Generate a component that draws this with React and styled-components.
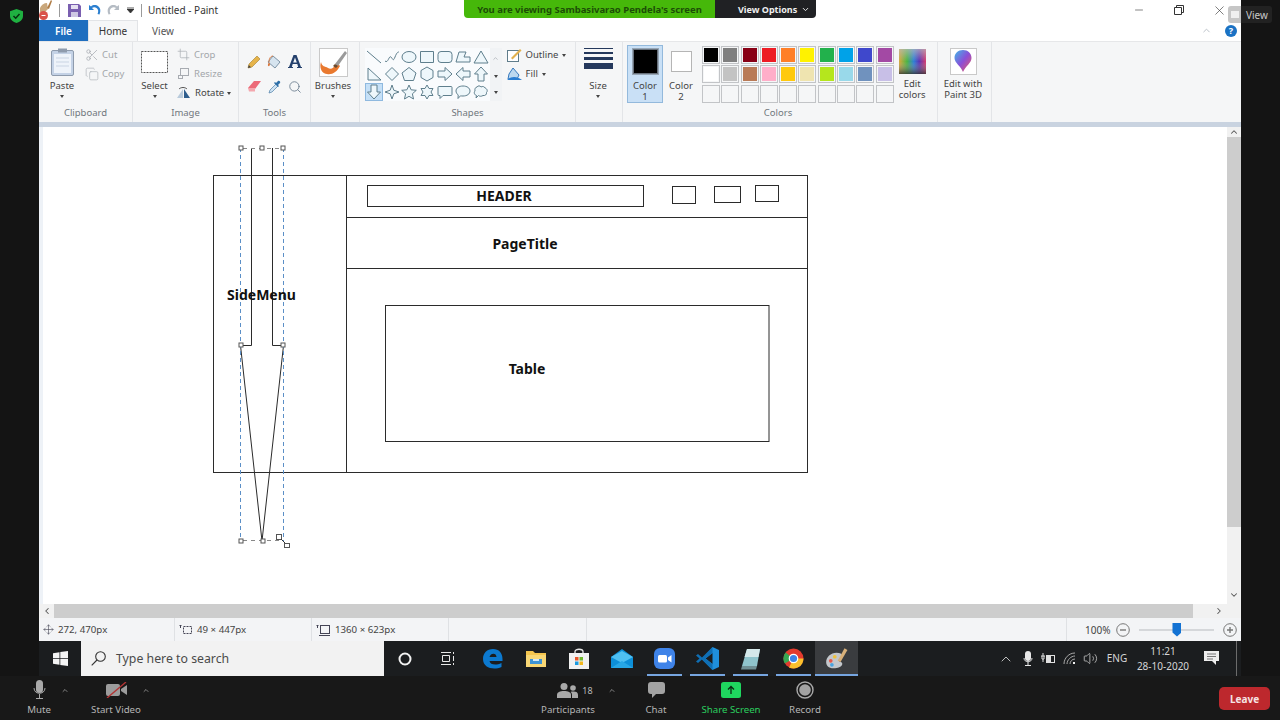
import styled, { createGlobalStyle } from 'styled-components';
import { ChevronDown, ChevronUp, ChevronLeft, ChevronRight, Scissors, Copy, Crop, Search, Move, Minus, Volume2, X } from 'lucide-react';

const GlobalStyle = createGlobalStyle`
  html, body { margin: 0; padding: 0; background: #141414; }
  * { box-sizing: border-box; }
  body { font-family: "Noto Sans", "Open Sans", sans-serif; }
`;

const Screen = styled.div`
  position: relative;
  width: 1280px;
  height: 720px;
  overflow: hidden;
  background: #141414;
`;
const Upper = styled.div`
  display: flex;
  height: 676px;
`;
const Side = styled.div`
  width: 39px;
  flex: none;
  padding: 9px 0 0 10px;
  line-height: 0;
`;
const Middle = styled.div`
  width: 1202px;
  display: flex;
  flex-direction: column;
`;
const PaintWindow = styled.div`
  height: 641px;
  display: flex;
  flex-direction: column;
  background: #fff;
  color: #3c3c3c;
  font-size: 10px;
`;

/* title bar */
const TitleBar = styled.div`
  height: 20px;
  display: flex;
  align-items: center;
  background: #fff;
`;
const QuickIcon = styled.span`
  width: ${p => p.$w}px;
  height: 20px;
  flex: none;
  display: flex;
  align-items: center;
  justify-content: center;
`;
const QuickSep = styled.span`
  width: 1px;
  height: 13px;
  flex: none;
  background: #9a9a9a;
`;
const TitleText = styled.span`
  margin-left: 6px;
  font-size: 10px;
  color: #333;
`;
const WinButtons = styled.div`
  margin-left: auto;
  padding-right: 2px;
  display: flex;
`;
const WinButton = styled.span`
  width: 40px;
  height: 20px;
  display: flex;
  align-items: center;
  justify-content: center;
`;

/* tabs */
const TabRow = styled.div`
  height: 21px;
  display: flex;
  align-items: stretch;
`;
const FileTab = styled.div`
  width: 49px;
  background: #1f6ebf;
  color: #fff;
  font-size: 10px;
  font-weight: 600;
  display: flex;
  align-items: center;
  justify-content: center;
`;
const Tab = styled.div`
  width: 50px;
  font-size: 10px;
  display: flex;
  align-items: center;
  justify-content: center;
  color: ${p => (p.$active ? '#333' : '#555')};
  background: ${p => (p.$active ? '#f6f7f8' : 'transparent')};
  border: 1px solid ${p => (p.$active ? '#e2e4e7' : 'transparent')};
  border-bottom: 0;
`;
const TabTools = styled.div`
  margin-left: auto;
  width: 40px;
  padding-right: 4px;
  display: flex;
  align-items: center;
  justify-content: space-between;
`;
const Help = styled.span`
  width: 12px;
  height: 12px;
  border-radius: 50%;
  background: #1a72c4;
  color: #fff;
  font-size: 9px;
  font-weight: 700;
  display: flex;
  align-items: center;
  justify-content: center;
`;

/* ribbon */
const Ribbon = styled.div`
  height: 81px;
  display: flex;
  background: #f5f6f7;
  border-top: 1px solid #e6e7e9;
`;
const Group = styled.div`
  width: ${p => p.$w}px;
  flex: none;
  display: flex;
  flex-direction: column;
  border-right: 1px solid #e3e5e8;
`;
const GroupBody = styled.div`
  height: 62px;
  display: flex;
  padding-left: ${p => p.$pl || 0}px;
  gap: ${p => p.$gap || 0}px;
`;
const GroupLabel = styled.div`
  height: 18px;
  padding-right: ${p => p.$pr || 0}px;
  font-size: 9.5px;
  color: #70767d;
  text-align: center;
  line-height: 18px;
`;
const LargeButton = styled.div`
  width: ${p => p.$w}px;
  flex: none;
  height: 58px;
  padding-top: 2px;
  display: flex;
  flex-direction: column;
  align-items: center;
`;
const LargeIcon = styled.div`
  height: 36px;
  display: flex;
  align-items: center;
  justify-content: center;
`;
const LargeText = styled.div`
  height: 11px;
  line-height: 11px;
  font-size: 9.5px;
  color: #444;
  white-space: nowrap;
`;
const Caret = styled.span`
  display: inline-block;
  width: 0;
  height: 0;
  margin: ${p => p.$m || '4px 0 0'};
  border-left: 2.5px solid transparent;
  border-right: 2.5px solid transparent;
  border-top: 3px solid #444;
`;
const SmallColumn = styled.div`
  display: flex;
  flex-direction: column;
  padding-top: 3px;
`;
const SmallRow = styled.div`
  height: 19px;
  display: flex;
  align-items: center;
  gap: ${p => p.$gap || 4}px;
  font-size: 9.5px;
  color: ${p => (p.$dim ? '#a3a6aa' : '#444')};
  white-space: nowrap;
`;
const ToolGrid = styled.div`
  display: grid;
  grid-template-columns: repeat(3, 20.5px);
  grid-auto-rows: 25px;
  padding: 7px 0 0 5px;
  place-items: center;
`;
const Gallery = styled.div`
  display: flex;
  margin-top: 6px;
  height: 53px;
  background: #f9fbfd;
`;
const ShapeGrid = styled.div`
  display: grid;
  grid-template-columns: repeat(7, 17.8px);
  grid-auto-rows: 17.6px;
`;
const ShapeCell = styled.div`
  display: flex;
  align-items: center;
  justify-content: center;
  background: ${p => (p.$on ? '#c5e0f7' : 'transparent')};
  outline: ${p => (p.$on ? '1px solid #8fb9df' : 'none')};
  outline-offset: -1px;
`;
const GalleryScroll = styled.div`
  width: 12px;
  display: flex;
  flex-direction: column;
  align-items: center;
  justify-content: space-around;
  background: #f1f3f5;
`;
const SizeLines = styled.div`
  width: 29px;
  height: 34px;
  display: flex;
  flex-direction: column;
  gap: 3px;
  padding-top: 3px;
`;
const SizeLine = styled.div`
  height: ${p => p.$h}px;
  background: #24385c;
`;
const ColorButton = styled.div`
  width: 36px;
  height: 58px;
  margin-top: 3px;
  flex: none;
  display: flex;
  flex-direction: column;
  align-items: center;
  padding-top: ${p => (p.$on ? 2 : 0)}px;
  background: ${p => (p.$on ? '#c9e0f6' : 'transparent')};
  border: 1px solid ${p => (p.$on ? '#93b9dc' : 'transparent')};
`;
const ColorSwatch = styled.div`
  width: ${p => p.$s}px;
  height: ${p => p.$s}px;
  margin: ${p => p.$m};
  flex: none;
  background: ${p => p.$c};
  border: 2px solid ${p => (p.$on ? '#68717c' : '#fff')};
  outline: 1px solid ${p => (p.$on ? '#97a6b5' : '#b5b5b5')};
  outline-offset: -1px;
`;
const Palette = styled.div`
  display: grid;
  grid-template-columns: repeat(10, 18px);
  grid-auto-rows: 18px;
  gap: 1.3px;
  margin: 4px 0 0 3px;
`;
const PaletteCell = styled.div`
  background: ${p => p.$c || '#f5f6f7'};
  border: 2px solid #f5f6f7;
  outline: 1px solid #c2c4c7;
  outline-offset: -1px;
`;
const IconFrame = styled.div`
  width: ${p => p.$s || 27}px;
  height: ${p => p.$s || 27}px;
  background: #fff;
  border: 1px solid #c9c9c9;
  display: flex;
  align-items: center;
  justify-content: center;
  overflow: hidden;
`;
const BlueBand = styled.div`
  height: 5px;
  flex: none;
  background: #c9d3e0;
`;

/* canvas */
const CanvasRow = styled.div`
  height: 477px;
  display: flex;
`;
const CanvasPane = styled.div`
  flex: 1;
  padding-left: 4px;
  background: #eef2f7;
`;
const CanvasSheet = styled.svg`
  display: block;
  width: 1184px;
  height: 477px;
  background: #fff;
`;
const VScroll = styled.div`
  width: 14px;
  display: flex;
  flex-direction: column;
  background: #f1f1f1;
`;
const ScrollEnd = styled.div`
  height: ${p => p.$h || 10}px;
  width: ${p => p.$w || 14}px;
  flex: none;
  display: flex;
  align-items: center;
  justify-content: center;
  margin-top: ${p => p.$mt || 0}px;
  margin-left: ${p => p.$ml || 0}px;
`;
const VThumb = styled.div`
  height: 390px;
  background: #cdcdcd;
`;
const HScroll = styled.div`
  height: 14px;
  flex: none;
  display: flex;
  background: #f1f1f1;
`;
const HThumb = styled.div`
  width: 1139px;
  background: #cdcdcd;
`;

/* status bar */
const StatusBar = styled.div`
  height: 23px;
  display: flex;
  background: #f3f4f6;
  font-size: 9.7px;
  color: #444;
`;
const StatusCell = styled.div`
  width: ${p => p.$w}px;
  flex: none;
  display: flex;
  align-items: center;
  gap: ${p => p.$gap || 4}px;
  padding-left: 4px;
  border-right: 1px solid #dfe1e4;
`;
const ZoomCell = styled.div`
  flex: 1;
  display: flex;
  align-items: center;
  padding-left: 18px;
  font-size: 10px;
`;
const ZoomTrack = styled.div`
  position: relative;
  width: 75px;
  height: 2px;
  margin: 0 9px 0 9px;
  background: #d5d7da;
`;
const ZoomThumb = styled.div`
  position: absolute;
  left: 33px;
  top: -6px;
  width: 9px;
  height: 14px;
  background: #1372d3;
  clip-path: polygon(0 0, 100% 0, 100% 72%, 50% 100%, 0 72%);
`;

/* windows taskbar */
const Taskbar = styled.div`
  height: 35px;
  display: flex;
  background: #1b1d1f;
`;
const StartButton = styled.div`
  width: 42px;
  display: flex;
  align-items: center;
  justify-content: center;
`;
const SearchBox = styled.div`
  width: 303px;
  display: flex;
  align-items: center;
  gap: 10px;
  padding-left: 10px;
  background: #f2f2f2;
  color: #4a4a4a;
  font-size: 12.3px;
`;
const TaskIcon = styled.div`
  position: relative;
  width: ${p => p.$w || 43}px;
  flex: none;
  display: flex;
  align-items: center;
  justify-content: center;
  background: ${p => (p.$active ? '#3a3c3f' : 'transparent')};
  &::after {
    content: ${p => (p.$open ? "''" : 'none')};
    position: absolute;
    bottom: 0;
    left: ${p => (p.$active ? 0 : 4)}px;
    right: ${p => (p.$active ? 0 : 4)}px;
    height: 2px;
    background: #76a5e0;
  }
`;
const Tray = styled.div`
  margin-left: auto;
  display: flex;
  color: #d6d6d6;
  font-size: 10px;
`;
const TrayItem = styled.div`
  width: ${p => p.$w}px;
  display: flex;
  flex-direction: column;
  align-items: center;
  justify-content: center;
  line-height: 15px;
  white-space: nowrap;
`;
const TrayEdge = styled.div`
  width: 1px;
  margin: 0 4px 0 6px;
  background: #6c6c6c;
`;

/* meeting toolbar */
const MeetingBar = styled.div`
  height: 44px;
  display: flex;
  padding-left: 17px;
  background: #181818;
`;
const MeetGroup = styled.div`
  display: flex;
  margin-left: ${p => p.$ml || 0}px;
`;
const MeetItem = styled.div`
  width: ${p => p.$w}px;
  margin-left: ${p => p.$ml || 0}px;
  flex: none;
  padding-top: 4px;
  display: flex;
  flex-direction: column;
  align-items: center;
`;
const MeetIcon = styled.div`
  height: 20px;
  display: flex;
  align-items: center;
  gap: 4px;
  padding-left: ${p => p.$pl || 0}px;
  color: #b8b8b8;
  font-size: 9px;
`;
const MeetLabel = styled.div`
  margin-top: 4px;
  line-height: 12px;
  font-size: 9.7px;
  white-space: nowrap;
  color: ${p => p.$c || '#b5b5b5'};
`;
const MeetCaret = styled.div`
  width: 8px;
  margin-left: ${p => p.$ml || 0}px;
  height: 28px;
  flex: none;
  display: flex;
  align-items: center;
  justify-content: center;
`;
const LeaveButton = styled.div`
  width: 51px;
  height: 23px;
  margin: 11px 10px 0 auto;
  border-radius: 5px;
  background: #bd282d;
  color: #f5e3e3;
  font-size: 10px;
  font-weight: 700;
  display: flex;
  align-items: center;
  justify-content: center;
`;

/* things lying over the window */
const ShareBanner = styled.div`
  position: absolute;
  left: 464px;
  top: 0;
  height: 18px;
  display: flex;
  font-size: 9.5px;
  font-weight: 700;
  border-radius: 0 0 4px 4px;
  overflow: hidden;
  white-space: nowrap;
`;
const BannerText = styled.div`
  width: 251px;
  display: flex;
  align-items: center;
  justify-content: center;
  background: #46b80a;
  color: #1c4d07;
`;
const BannerOptions = styled.div`
  width: 101px;
  padding-left: 23px;
  display: flex;
  align-items: center;
  gap: 4px;
  font-size: 9px;
  background: #202124;
  color: #f0f0f0;
`;
const ViewPill = styled.div`
  position: absolute;
  left: 1228px;
  top: 6px;
  width: 44px;
  height: 17px;
  padding-left: 3px;
  border-radius: 3px;
  display: flex;
  align-items: center;
  gap: 7px;
  background: linear-gradient(90deg, #c6c6c6 13px, #222 13px);
  color: #c9c9c9;
  font-size: 10px;
`;
const ViewSquare = styled.span`
  width: 8px;
  height: 7px;
  background: #efefef;
`;

const palette = [
  ['#000000', '#7f7f7f', '#880015', '#ed1c24', '#ff7f27', '#fff200', '#22b14c', '#00a2e8', '#3f48cc', '#a349a4'],
  ['#ffffff', '#c3c3c3', '#b97a57', '#ffaec9', '#ffc90e', '#efe4b0', '#b5e61d', '#99d9ea', '#7092be', '#c8bfe7'],
  Array(10).fill(''),
];

const shapes = [
  'M1 2L15 14',
  'M1 12C4 15 5 6 7 8S9 13 11 8S14 3 15 3',
  'M1 8a7 5.5 0 1 0 14 0a7 5.5 0 1 0 -14 0z',
  'M1.5 2.5h13v11h-13z',
  'M4 2.5h8a3 3 0 0 1 3 3v5a3 3 0 0 1-3 3H4a3 3 0 0 1-3-3v-5a3 3 0 0 1 3-3z',
  'M1 13L4 3h7l-2 5h6v5z',
  'M8 2L15 14H1z',
  'M2 2L15 14H2z',
  'M8 1.500L14.500 8L8 14.500L1.500 8z',
  'M8 1.500L15 7L12.500 14.500h-9L1 7z',
  'M8 1l6 3.500v7L8 15l-6-3.500v-7z',
  'M1 5h7V1.500L15 8l-7 6.500V11H1z',
  'M15 5H8V1.500L1 8l7 6.500V11h7z',
  'M5 15V8H1.500L8 1l6.500 7H11v7z',
  'M5 1v7H1.500L8 15l6.500-7H11V1z',
  'M8 1l1.800 5.200L15 8l-5.200 1.800L8 15l-1.800-5.200L1 8l5.200-1.800z',
  'M8 1l2.100 4.800 5.200.5-3.900 3.500 1.100 5.200L8 12.300 3.500 15l1.100-5.200L.7 6.300l5.200-.5z',
  'M8 1l2 3.500h4L12 8l2 3.500h-4L8 15l-2-3.500H2L4 8 2 4.500h4z',
  'M2 2.500h12a1 1 0 0 1 1 1v7a1 1 0 0 1-1 1H6l-3 3v-3H2a1 1 0 0 1-1-1v-7a1 1 0 0 1 1-1z',
  'M8 2c4 0 7 2 7 5s-3 5-7 5c-1 0-2 0-2.500-.2L3 14.500l.2-3.500C2 10 1 8.500 1 7c0-3 3-5 7-5z',
  'M4 3c1-1.500 3-1.500 4 0c1.500-1 3.500-.5 4 1c2 .5 3 3 1.500 4.500c.5 2-1.500 3.500-3.500 3c-1.500 1-3.500 1-4.500 0L3 14l.5-2.500c-2-.5-3-3-1.500-4.500C1.500 5 2.500 3 4 3z',
];

const PaintLogo = ({ size = 20 }) => (
  <svg width={size} height={size} viewBox="0 0 20 20">
    <path d="M1 13c0-4 4-8 9-8 3 0 5 1 5 3s-3 1.500-3 3.500 3.500 1 3 3.500-4 3.500-7.500 3.500C3 18.500 1 16 1 13z" fill="#c3c7cc" />
    <circle cx="5" cy="12" r="1.600" fill="#e8574a" />
    <circle cx="8.500" cy="8.500" r="1.600" fill="#f0c23c" />
    <circle cx="6" cy="15.500" r="1.600" fill="#4aa3df" />
    <path d="M11 12L17 1l2.500 1.500-6 10.500z" fill="#d8b07a" />
  </svg>
);

const Handle = ({ x, y }) => <rect x={x - 2} y={y - 2} width="4" height="4" fill="#fff" stroke="#555" strokeWidth="1" />;

const Wireframe = () => (
  <CanvasSheet viewBox="43 127 1184 477">
    <g fill="none" stroke="#2b2b2b" strokeWidth="1">
      <rect x="213.500" y="175.500" width="594" height="297" />
      <path d="M346.500 175v297M347 217.500h460M347 268.500h460" />
      <rect x="367.500" y="185.500" width="276" height="21" />
      <rect x="672.500" y="186.500" width="23" height="17" />
      <rect x="714.500" y="186.500" width="26" height="16" />
      <rect x="755.500" y="185.500" width="23" height="16" />
      <rect x="385.500" y="305.500" width="383.500" height="136" />
      <path d="M251.500 148v197.500H240.500L262 541L283.500 345.500H272.500V148" />
    </g>
    <g fill="none" stroke="#5b8fc7" strokeWidth="1" strokeDasharray="4 3">
      <path d="M240.500 148v393M283.500 148v393" />
    </g>
    <path d="M243 148.500h37M243 540.500h37" fill="none" stroke="#888" strokeDasharray="4 4" />
    <Handle x={241} y={148} />
    <Handle x={262} y={148} />
    <Handle x={283} y={148} />
    <Handle x={241} y={345} />
    <Handle x={283} y={345} />
    <Handle x={241} y={541} />
    <Handle x={263} y={541} />
    <rect x="276.500" y="534.500" width="5" height="5" fill="#fff" stroke="#555" />
    <rect x="284.500" y="543.500" width="5" height="4" fill="#fff" stroke="#555" />
    <path d="M281 539l4 4" stroke="#333" />
    <g fontFamily="'Noto Sans', 'Open Sans', sans-serif" fontWeight="700" fontSize="14" fill="#111" textAnchor="middle">
      <text x="504" y="201">HEADER</text>
      <text x="525" y="249">PageTitle</text>
      <text x="261.500" y="300">SideMenu</text>
      <text x="527" y="374">Table</text>
    </g>
  </CanvasSheet>
);

const App = () => {
  return (
    <Screen>
      <GlobalStyle />
      <Upper>
        <Side>
          <svg width="13" height="14" viewBox="0 0 13 14">
            <path d="M6.500 0L13 2.200V7c0 3.500-3 6-6.500 7C3 13 0 10.500 0 7V2.200z" fill="#1fb141" />
            <path d="M3.500 7l2.200 2.200L9.500 5" fill="none" stroke="#06310f" strokeWidth="1.500" />
          </svg>
        </Side>
        <Middle>
          <PaintWindow>
            <TitleBar>
              <QuickIcon $w={13}>
                <svg width="13" height="20" viewBox="0 0 13 20">
                  <path d="M1 8c1-3 4-5 7-5l1 6-3 3H1z" fill="#c9a77c" />
                  <path d="M8 8L12 0l1 1-3 8z" fill="#b07c45" />
                  <circle cx="4.500" cy="15.500" r="4.500" fill="#d9534a" />
                  <rect x="2.500" y="15" width="4" height="1" fill="#fff" />
                </svg>
              </QuickIcon>
              <QuickIcon $w={7} />
              <QuickSep />
              <QuickIcon $w={8} />
              <QuickIcon $w={13}>
                <svg width="13" height="13" viewBox="0 0 13 13">
                  <path d="M0 0h11l2 2v11H0z" fill="#7a5fb0" />
                  <rect x="3" y="1" width="7" height="4" fill="#e5e0f0" />
                  <rect x="3" y="8" width="7" height="5" fill="#cfc8e3" />
                </svg>
              </QuickIcon>
              <QuickIcon $w={7} />
              <QuickIcon $w={13}>
                <svg width="13" height="12" viewBox="0 0 13 12">
                  <path d="M1 1v5h5L4 4c2-1.500 5-.8 6 2 .3 1 .2 2.500-.5 4l2 .5C13 7 12.500 4 10.500 2.500 8 .5 5 .8 3 2.500z" fill="#2b7fd0" />
                </svg>
              </QuickIcon>
              <QuickIcon $w={6} />
              <QuickIcon $w={13}>
                <svg width="13" height="12" viewBox="0 0 13 12">
                  <path d="M12 1v5H7l2-2C7 2.500 4 3.200 3 6c-.3 1-.2 2.500.5 4l-2 .5C0 7 .5 4 2.500 2.500 5 .5 8 .8 10 2.500z" fill="#b5bcc4" />
                </svg>
              </QuickIcon>
              <QuickIcon $w={21}>
                <svg width="7" height="6" viewBox="0 0 7 6">
                  <path d="M0 0h7M0 2l3.500 4L7 2z" stroke="#333" fill="#333" strokeWidth=".8" />
                </svg>
              </QuickIcon>
              <QuickSep />
              <TitleText>Untitled - Paint</TitleText>
              <WinButtons>
                <WinButton><Minus size={12} color="#333" strokeWidth={1.200} /></WinButton>
                <WinButton>
                  <svg width="10" height="10" viewBox="0 0 10 10" fill="none" stroke="#333">
                    <path d="M.5 2.500h7v7h-7zM2.500 2.500v-2h7v7h-2" />
                  </svg>
                </WinButton>
                <WinButton><X size={15} color="#333" strokeWidth={1} /></WinButton>
              </WinButtons>
            </TitleBar>
            <TabRow>
              <FileTab>File</FileTab>
              <Tab $active>Home</Tab>
              <Tab>View</Tab>
              <TabTools>
                <ChevronUp size={11} color="#b6bcc4" strokeWidth={2} />
                <Help>?</Help>
              </TabTools>
            </TabRow>
            <Ribbon>
              <Group $w={94}>
                <GroupBody>
                  <LargeButton $w={46}>
                    <LargeIcon>
                      <svg width="23" height="28" viewBox="0 0 23 28">
                        <rect x="0.500" y="2.500" width="22" height="25" rx="1.500" fill="#c4d2e6" stroke="#8e9bad" />
                        <rect x="3" y="6" width="17" height="19" fill="#eef3fa" />
                        <path d="M5 10h13M5 14h13M5 18h13" stroke="#c9d4e3" />
                        <rect x="7" y="0.500" width="9" height="4" fill="#8e9bad" />
                      </svg>
                    </LargeIcon>
                    <LargeText>Paste</LargeText>
                    <Caret />
                  </LargeButton>
                  <SmallColumn>
                    <SmallRow $dim $gap={3}><Scissors size={14} color="#a7abb1" strokeWidth={1.300} />Cut</SmallRow>
                    <SmallRow $dim $gap={3}><Copy size={14} color="#b5b9be" strokeWidth={1.300} />Copy</SmallRow>
                  </SmallColumn>
                </GroupBody>
                <GroupLabel>Clipboard</GroupLabel>
              </Group>
              <Group $w={106}>
                <GroupBody $pl={6} $gap={7}>
                  <LargeButton $w={31}>
                    <LargeIcon>
                      <svg width="27" height="22" viewBox="0 0 27 22">
                        <rect x=".5" y=".5" width="26" height="21" fill="#fff" stroke="#555" strokeDasharray="2 1" />
                      </svg>
                    </LargeIcon>
                    <LargeText>Select</LargeText>
                    <Caret />
                  </LargeButton>
                  <SmallColumn>
                    <SmallRow $dim><Crop size={13} color="#a7abb1" strokeWidth={1.300} />Crop</SmallRow>
                    <SmallRow $dim>
                      <svg width="13" height="13" viewBox="0 0 13 13" fill="none" stroke="#a7abb1">
                        <rect x="3.500" y="1.500" width="8" height="7" />
                        <rect x="1.500" y="8.500" width="4" height="3" />
                      </svg>
                      Resize
                    </SmallRow>
                    <SmallRow>
                      <svg width="14" height="13" viewBox="0 0 14 13">
                        <path d="M0 12L6 3v9z" fill="#b9cbdc" />
                        <path d="M7 12V3l6 9z" fill="#2d5d8d" />
                        <path d="M2 3c2-2 6-2 8 0" fill="none" stroke="#555" />
                      </svg>
                      Rotate<Caret $m="1px 0 0 -1px" />
                    </SmallRow>
                  </SmallColumn>
                </GroupBody>
                <GroupLabel>Image</GroupLabel>
              </Group>
              <Group $w={72}>
                <GroupBody>
                  <ToolGrid>
                    <svg width="14" height="14" viewBox="0 0 14 14">
                      <path d="M1 13l1-4 8-8 3 3-8 8z" fill="#e6b44a" stroke="#a57f2e" strokeWidth=".6" />
                      <path d="M1 13l.8-3 2.200 2.200z" fill="#444" />
                    </svg>
                    <svg width="15" height="14" viewBox="0 0 15 14">
                      <path d="M6 1l7 6-5 6-7-6z" fill="#d6e4ef" stroke="#7c93a6" />
                      <path d="M2 7c-1 2-1.500 3-.8 4 1 .5 1.800-.5 1.800-2z" fill="#d9773c" />
                      <path d="M6 1c-2 0-4 2-4 6" fill="none" stroke="#d9773c" />
                    </svg>
                    <svg width="14" height="13" viewBox="0 0 14 13">
                      <path d="M5.500 0h3L13 12h1v1H9v-1h1.200L9.300 9H4.700l-.9 3H5v1H0v-1h1zM5.200 7.500h3.600L7 2.500z" fill="#24406c" />
                    </svg>
                    <svg width="15" height="13" viewBox="0 0 15 13">
                      <path d="M1 8l6-7h7l-6 8H2z" fill="#ec6a78" />
                      <path d="M1 8h7v3.500H2z" fill="#f4a7ae" />
                    </svg>
                    <svg width="14" height="14" viewBox="0 0 14 14">
                      <path d="M1 13l1-3 6-6 2 2-6 6z" fill="#cfe3f3" stroke="#4e7ea8" strokeWidth=".7" />
                      <path d="M8 3l2-2c1-1 3 1 2 2l-2 2 1 1-1 1-4-4 1-1z" fill="#2d6fa8" />
                    </svg>
                    <Search size={14} color="#6d7f90" strokeWidth={1.500} />
                  </ToolGrid>
                </GroupBody>
                <GroupLabel>Tools</GroupLabel>
              </Group>
              <Group $w={49}>
                <GroupBody>
                  <LargeButton $w={44}>
                    <LargeIcon>
                      <IconFrame $s={29}>
                        <svg width="27" height="27" viewBox="0 0 27 27">
                          <path d="M1 13c1 5 4 4 7 6s6 0 9-5l3 3c-3 6-8 9-13 8-5-.5-8-6-6-12z" fill="#e9792f" />
                          <path d="M15 15L25 2l2 2-9 13z" fill="#9a9a9a" />
                          <path d="M15 15l3 2-2 2-3-2z" fill="#6b4a2e" />
                        </svg>
                      </IconFrame>
                    </LargeIcon>
                    <LargeText>Brushes</LargeText>
                    <Caret />
                  </LargeButton>
                </GroupBody>
                <GroupLabel>&nbsp;</GroupLabel>
              </Group>
              <Group $w={216}>
                <GroupBody $pl={5}>
                  <Gallery>
                    <ShapeGrid>
                      {shapes.map((d, i) => (
                        <ShapeCell key={d} $on={i === 14}>
                          <svg width="16" height="16" viewBox="0 0 16 16">
                            <path d={d} fill={i < 2 ? 'none' : '#eef7fb'} stroke="#5f7f8d" strokeWidth="1" />
                          </svg>
                        </ShapeCell>
                      ))}
                    </ShapeGrid>
                    <GalleryScroll>
                      <ChevronUp size={7} color="#b3b8be" strokeWidth={3} />
                      <Caret $m="0" />
                      <Caret $m="0" />
                    </GalleryScroll>
                  </Gallery>
                  <SmallColumn>
                    <SmallRow>
                      <svg width="15" height="14" viewBox="0 0 15 14" style={{ marginLeft: 5 }}>
                        <rect x=".5" y="2.500" width="11" height="11" fill="#fff" stroke="#607d8b" />
                        <path d="M4 10L13 1l1.500 1.500-9 9z" fill="#e2b14e" />
                      </svg>
                      Outline<Caret $m="1px 0 0" />
                    </SmallRow>
                    <SmallRow>
                      <svg width="15" height="14" viewBox="0 0 15 14" style={{ marginLeft: 5 }}>
                        <path d="M6 1l6 7-2 4H1l1-5z" fill="#bcd8ef" stroke="#3578bd" />
                        <path d="M0 13c4-4 10-4 15 0z" fill="#2a7dd1" />
                      </svg>
                      Fill<Caret $m="1px 0 0" />
                    </SmallRow>
                  </SmallColumn>
                </GroupBody>
                <GroupLabel>Shapes</GroupLabel>
              </Group>
              <Group $w={47}>
                <GroupBody>
                  <LargeButton $w={44}>
                    <LargeIcon>
                      <SizeLines>
                        <SizeLine $h={1} />
                        <SizeLine $h={2} />
                        <SizeLine $h={3} />
                        <SizeLine $h={6} />
                      </SizeLines>
                    </LargeIcon>
                    <LargeText>Size</LargeText>
                    <Caret />
                  </LargeButton>
                </GroupBody>
                <GroupLabel>&nbsp;</GroupLabel>
              </Group>
              <Group $w={315}>
                <GroupBody $pl={4}>
                  <ColorButton $on>
                    <ColorSwatch $s={27} $m="0 0 5px" $c="#000" $on />
                    <LargeText>Color</LargeText>
                    <LargeText>1</LargeText>
                  </ColorButton>
                  <ColorButton>
                    <ColorSwatch $s={21} $m="5px 0 8px" $c="#fff" />
                    <LargeText>Color</LargeText>
                    <LargeText>2</LargeText>
                  </ColorButton>
                  <Palette>
                    {palette.flat().map((c, i) => (
                      <PaletteCell key={i} $c={c} />
                    ))}
                  </Palette>
                  <LargeButton $w={37}>
                    <LargeIcon>
                      <svg width="27" height="25" viewBox="0 0 27 25">
                        <defs>
                          <linearGradient id="rainbow" x1="0" x2="1" y1="0" y2="0">
                            <stop offset="0" stopColor="#d9a93c" />
                            <stop offset=".3" stopColor="#4bb543" />
                            <stop offset=".55" stopColor="#2f7fd8" />
                            <stop offset=".75" stopColor="#5a35b5" />
                            <stop offset="1" stopColor="#d93a6d" />
                          </linearGradient>
                          <linearGradient id="fade" x1="0" x2="0" y1="0" y2="1">
                            <stop offset="0" stopColor="#bbb" stopOpacity=".7" />
                            <stop offset=".5" stopColor="#bbb" stopOpacity="0" />
                            <stop offset="1" stopColor="#333" stopOpacity=".8" />
                          </linearGradient>
                        </defs>
                        <rect width="27" height="25" fill="url(#rainbow)" />
                        <rect width="27" height="25" fill="url(#fade)" />
                      </svg>
                    </LargeIcon>
                    <LargeText>Edit</LargeText>
                    <LargeText>colors</LargeText>
                  </LargeButton>
                </GroupBody>
                <GroupLabel $pr={4}>Colors</GroupLabel>
              </Group>
              <Group $w={54}>
                <GroupBody>
                  <LargeButton $w={50}>
                    <LargeIcon>
                      <IconFrame>
                        <svg width="20" height="24" viewBox="0 0 20 24">
                          <defs>
                            <linearGradient id="drop" x1="0" x2="1" y1="0" y2="1">
                              <stop offset="0" stopColor="#3fb8e8" />
                              <stop offset=".5" stopColor="#8a4fd8" />
                              <stop offset="1" stopColor="#ef5a5a" />
                            </linearGradient>
                          </defs>
                          <path d="M10 1c5 0 8.500 3.500 8.500 8 0 5-6 8-8.500 14C8 17 1.500 14 1.500 9 1.500 4.500 5 1 10 1z" fill="url(#drop)" />
                        </svg>
                      </IconFrame>
                    </LargeIcon>
                    <LargeText>Edit with</LargeText>
                    <LargeText>Paint 3D</LargeText>
                  </LargeButton>
                </GroupBody>
                <GroupLabel>&nbsp;</GroupLabel>
              </Group>
            </Ribbon>
            <BlueBand />
            <CanvasRow>
              <CanvasPane>
                <Wireframe />
              </CanvasPane>
              <VScroll>
                <ScrollEnd><ChevronUp size={10} color="#555" strokeWidth={2.500} /></ScrollEnd>
                <VThumb />
                <ScrollEnd $mt={63}><ChevronDown size={10} color="#555" strokeWidth={2.500} /></ScrollEnd>
              </VScroll>
            </CanvasRow>
            <HScroll>
              <ScrollEnd $w={15} $h={14}><ChevronLeft size={10} color="#555" strokeWidth={2.500} /></ScrollEnd>
              <HThumb />
              <ScrollEnd $h={14} $ml={19}><ChevronRight size={10} color="#555" strokeWidth={2.500} /></ScrollEnd>
            </HScroll>
            <StatusBar>
              <StatusCell $w={136}><Move size={11} color="#445" strokeWidth={1.300} />272, 470px</StatusCell>
              <StatusCell $w={137} $gap={5}>
                <svg width="13" height="12" viewBox="0 0 13 12" fill="none" stroke="#445">
                  <path d="M1.500 4V1M.5 2l1-1 1 1" />
                  <rect x="4.500" y="2.500" width="8" height="7" strokeDasharray="2 1" />
                </svg>
                49 × 447px
              </StatusCell>
              <StatusCell $w={137} $gap={5}>
                <svg width="14" height="12" viewBox="0 0 14 12" fill="none" stroke="#445">
                  <path d="M1.500 4V1M.5 2l1-1 1 1" />
                  <rect x="4.500" y="1.500" width="9" height="8" />
                  <path d="M3 11.500h11" />
                </svg>
                1360 × 623px
              </StatusCell>
              <StatusCell $w={138} />
              <StatusCell $w={480} />
              <ZoomCell>
                100%
                <svg width="14" height="14" viewBox="0 0 14 14" fill="none" stroke="#777" style={{ marginLeft: 6 }}>
                  <circle cx="7" cy="7" r="6.300" />
                  <path d="M4 7h6" strokeWidth="1.400" />
                </svg>
                <ZoomTrack><ZoomThumb /></ZoomTrack>
                <svg width="14" height="14" viewBox="0 0 14 14" fill="none" stroke="#777">
                  <circle cx="7" cy="7" r="6.300" />
                  <path d="M4 7h6M7 4v6" strokeWidth="1.400" />
                </svg>
              </ZoomCell>
            </StatusBar>
          </PaintWindow>
          <Taskbar>
            <StartButton>
              <svg width="15" height="15" viewBox="0 0 15 15" fill="#f4f4f4">
                <path d="M0 2.200L6.500 1.200V7H0zM7.300 1.100L15 0v7H7.300zM0 7.800h6.500v6L0 12.800zM7.300 7.800H15V15l-7.700-1.100z" />
              </svg>
            </StartButton>
            <SearchBox>
              <svg width="15" height="15" viewBox="0 0 15 15" fill="none" stroke="#333" strokeWidth="1.100">
                <circle cx="9.500" cy="5.500" r="4.800" />
                <path d="M6 9L.7 14.300" />
              </svg>
              Type here to search
            </SearchBox>
            <TaskIcon $w={42}>
              <svg width="14" height="14" viewBox="0 0 14 14">
                <circle cx="7" cy="7" r="5.500" fill="none" stroke="#f1f1f1" strokeWidth="2" />
              </svg>
            </TaskIcon>
            <TaskIcon $w={45}>
              <svg width="15" height="15" viewBox="0 0 15 15" fill="none" stroke="#e8e8e8">
                <path d="M0 1.500h10M0 13.500h10M1.500 4.500h7v6h-7zM12.500 1v2M12.500 5v5M12.500 12v2" />
              </svg>
            </TaskIcon>
            <TaskIcon>
              <svg width="21" height="21" viewBox="0 0 21 21">
                <path fillRule="evenodd" d="M1 11C1 5 5 1 11 1c6 0 9.500 4 9.500 10v2H7.500c.5 3.500 6 5 12 2v4c-8 3.500-18.500 1-18.500-8zM7.500 9h7c0-4.500-6-4.500-7 0z" fill="#0c79cf" />
              </svg>
            </TaskIcon>
            <TaskIcon>
              <svg width="20" height="17" viewBox="0 0 20 17">
                <path d="M0 1h7l2 2h11v14H0z" fill="#f4c54e" />
                <rect y="5" width="20" height="12" fill="#f8d775" />
                <rect x="4" y="9" width="12" height="5" fill="#3d93d4" />
                <rect x="7" y="9" width="6" height="2" fill="#d6e9f6" />
              </svg>
            </TaskIcon>
            <TaskIcon>
              <svg width="20" height="21" viewBox="0 0 20 21">
                <path d="M6 6V3.500C6 .5 14 .5 14 3.500V6" fill="none" stroke="#e6e6e6" strokeWidth="1.300" />
                <rect y="5" width="20" height="16" fill="#f1f1f1" />
                <rect x="6" y="9" width="3.500" height="3.500" fill="#e8562a" />
                <rect x="10.500" y="9" width="3.500" height="3.500" fill="#6fb82c" />
                <rect x="6" y="13.500" width="3.500" height="3.500" fill="#1b9ae0" />
                <rect x="10.500" y="13.500" width="3.500" height="3.500" fill="#f4b81c" />
              </svg>
            </TaskIcon>
            <TaskIcon>
              <svg width="22" height="19" viewBox="0 0 22 19">
                <path d="M0 8L11 0l11 8v11H0z" fill="#0d8fd8" />
                <path d="M0 8l11 6 11-6-11-6z" fill="#4fc0f2" />
                <path d="M0 19l11-7 11 7z" fill="#27a7e6" />
              </svg>
            </TaskIcon>
            <TaskIcon $open>
              <svg width="21" height="21" viewBox="0 0 21 21">
                <rect width="21" height="21" rx="6" fill="#3f83e8" />
                <rect x="4" y="7" width="9" height="7.500" rx="1.500" fill="#fff" />
                <path d="M14 9.500l3.500-2.500v7.500L14 12z" fill="#fff" />
              </svg>
            </TaskIcon>
            <TaskIcon $open>
              <svg width="23" height="23" viewBox="0 0 23 23">
                <path d="M16.500 0L23 3v17l-6.500 3L6 12.500z" fill="#1f8fdc" />
                <path d="M16.500 6v11l-7-5.500z" fill="#1b1d1f" />
                <path d="M6 12.500L2 16 0 14.500 3.500 11.500 0 8.500 2 7 6 10.500 16.500 0v6l-7 5.500 7 5.500v6z" fill="#0f6fb5" />
              </svg>
            </TaskIcon>
            <TaskIcon $open>
              <svg width="19" height="22" viewBox="0 0 19 22">
                <path d="M6 1h13l-3 17H1z" fill="#8fc4cc" />
                <path d="M6 1h13l-1.500 8H3.500z" fill="#d5e8ea" />
                <path d="M1 18h15l-1 3.500H0z" fill="#6f8f94" />
              </svg>
            </TaskIcon>
            <TaskIcon $open>
              <svg width="21" height="21" viewBox="0 0 21 21">
                <circle cx="10.500" cy="10.500" r="10" fill="#e33b2e" />
                <path d="M10.500 10.500L1.800 15.500A10 10 0 0 1 2.500 4.500z" fill="#36a852" />
                <path d="M10.500 10.500h10A10 10 0 0 1 6 19.500z" fill="#fbc02d" />
                <circle cx="10.500" cy="10.500" r="4.800" fill="#fff" />
                <circle cx="10.500" cy="10.500" r="3.600" fill="#3c83e6" />
              </svg>
            </TaskIcon>
            <TaskIcon $open $active>
              <PaintLogo size={23} />
            </TaskIcon>
            <Tray>
              <TrayItem $w={22}><ChevronUp size={16} strokeWidth={1.300} /></TrayItem>
              <TrayItem $w={21}>
                <svg width="10" height="15" viewBox="0 0 10 15">
                  <rect x="2" y="0" width="6" height="10" rx="3" fill="#e8e8e8" />
                  <path d="M1 7c0 5 8 5 8 0M5 11v3M2 14.500h6" fill="none" stroke="#e8e8e8" />
                </svg>
              </TrayItem>
              <TrayItem $w={21}>
                <svg width="15" height="11" viewBox="0 0 15 11" fill="none" stroke="#e0e0e0">
                  <rect x="5.500" y="2.500" width="8" height="7" />
                  <rect x="6" y="3" width="4" height="6" fill="#e0e0e0" stroke="none" />
                  <path d="M0 3h4M2 0v3M1 3v3h2V3M2 6v3" />
                </svg>
              </TrayItem>
              <TrayItem $w={21}>
                <svg width="13" height="13" viewBox="0 0 13 13" fill="none" stroke="#a9a9a9">
                  <path d="M1 12C1 6 6 1 12 1M4 12c0-4 4-8 8-8M7 12c0-2.500 2-5 5-5" />
                  <rect x="10" y="10" width="2" height="2" fill="#eee" stroke="none" />
                </svg>
              </TrayItem>
              <TrayItem $w={21}><Volume2 size={15} strokeWidth={1.200} /></TrayItem>
              <TrayItem $w={32}>ENG</TrayItem>
              <TrayItem $w={60}>
                <span>11:21</span>
                <span>28-10-2020</span>
              </TrayItem>
              <TrayItem $w={37}>
                <svg width="15" height="15" viewBox="0 0 15 15">
                  <path d="M0 0h15v10h-3v4l-4-4H0z" fill="#eee" />
                  <path d="M3 3h9M3 5.500h9M3 8h6" stroke="#777" />
                </svg>
              </TrayItem>
              <TrayEdge />
            </Tray>
          </Taskbar>
        </Middle>
        <Side />
      </Upper>
      <MeetingBar>
        <MeetGroup>
          <MeetItem $w={44}>
            <MeetIcon>
              <svg width="13" height="20" viewBox="0 0 13 20">
                <rect x="3" y="0" width="7" height="13" rx="3.500" fill="#a9a9a9" />
                <path d="M1 8c0 7 11 7 11 0M6.500 14v4M3 18.500h7" fill="none" stroke="#a9a9a9" />
              </svg>
            </MeetIcon>
            <MeetLabel>Mute</MeetLabel>
          </MeetItem>
          <MeetCaret><ChevronUp size={9} color="#aaa" strokeWidth={2.200} /></MeetCaret>
          <MeetItem $w={52} $ml={21}>
            <MeetIcon>
              <svg width="21" height="16" viewBox="0 0 21 16">
                <rect x="0" y="2" width="14" height="12" rx="2" fill="#9c9c9c" />
                <path d="M15 7l6-4v10l-6-4z" fill="#9c9c9c" />
                <path d="M1 16L20 0" stroke="#b23333" strokeWidth="1.400" />
              </svg>
            </MeetIcon>
            <MeetLabel>Start Video</MeetLabel>
          </MeetItem>
          <MeetCaret><ChevronUp size={9} color="#aaa" strokeWidth={2.200} /></MeetCaret>
        </MeetGroup>
        <MeetGroup $ml={390}>
          <MeetItem $w={56}>
            <MeetIcon $pl={14}>
              <svg width="21" height="15" viewBox="0 0 21 15" fill="#a9a9a9">
                <circle cx="7" cy="3.500" r="3.500" />
                <path d="M0 15v-3c0-3 3-4 7-4s7 1 7 4v3z" />
                <circle cx="16" cy="5" r="2.800" />
                <path d="M15 15v-3c0-1.500-.5-2.500-1.500-3 1-.5 2-.6 3-.5 3 0 4.500 1 4.500 3.500v3z" />
              </svg>
              18
            </MeetIcon>
            <MeetLabel>Participants</MeetLabel>
          </MeetItem>
          <MeetCaret $ml={12}><ChevronUp size={9} color="#aaa" strokeWidth={2.200} /></MeetCaret>
          <MeetItem $w={40} $ml={20}>
            <MeetIcon>
              <svg width="17" height="16" viewBox="0 0 17 16">
                <path d="M3 0h11a3 3 0 0 1 3 3v6a3 3 0 0 1-3 3H8l-4 4v-4H3a3 3 0 0 1-3-3V3a3 3 0 0 1 3-3z" fill="#a3a3a3" />
              </svg>
            </MeetIcon>
            <MeetLabel>Chat</MeetLabel>
          </MeetItem>
          <MeetItem $w={70} $ml={20}>
            <MeetIcon>
              <svg width="20" height="16" viewBox="0 0 20 16">
                <rect width="20" height="16" rx="2.500" fill="#1fd65f" />
                <path d="M10 12V5M7 7.500L10 4.500l3 3" fill="none" stroke="#0b2b14" strokeWidth="1.300" />
              </svg>
            </MeetIcon>
            <MeetLabel $c="#2bcf5f">Share Screen</MeetLabel>
          </MeetItem>
          <MeetItem $w={44} $ml={17}>
            <MeetIcon>
              <svg width="18" height="18" viewBox="0 0 18 18">
                <circle cx="9" cy="9" r="8" fill="none" stroke="#a9a9a9" strokeWidth="1.400" />
                <circle cx="9" cy="9" r="5.800" fill="#a3a3a3" />
              </svg>
            </MeetIcon>
            <MeetLabel>Record</MeetLabel>
          </MeetItem>
        </MeetGroup>
        <LeaveButton>Leave</LeaveButton>
      </MeetingBar>
      <ShareBanner>
        <BannerText>You are viewing Sambasivarao Pendela's screen</BannerText>
        <BannerOptions>View Options<ChevronDown size={9} strokeWidth={2.500} /></BannerOptions>
      </ShareBanner>
      <ViewPill><ViewSquare />View</ViewPill>
    </Screen>
  );
};

export default App;
